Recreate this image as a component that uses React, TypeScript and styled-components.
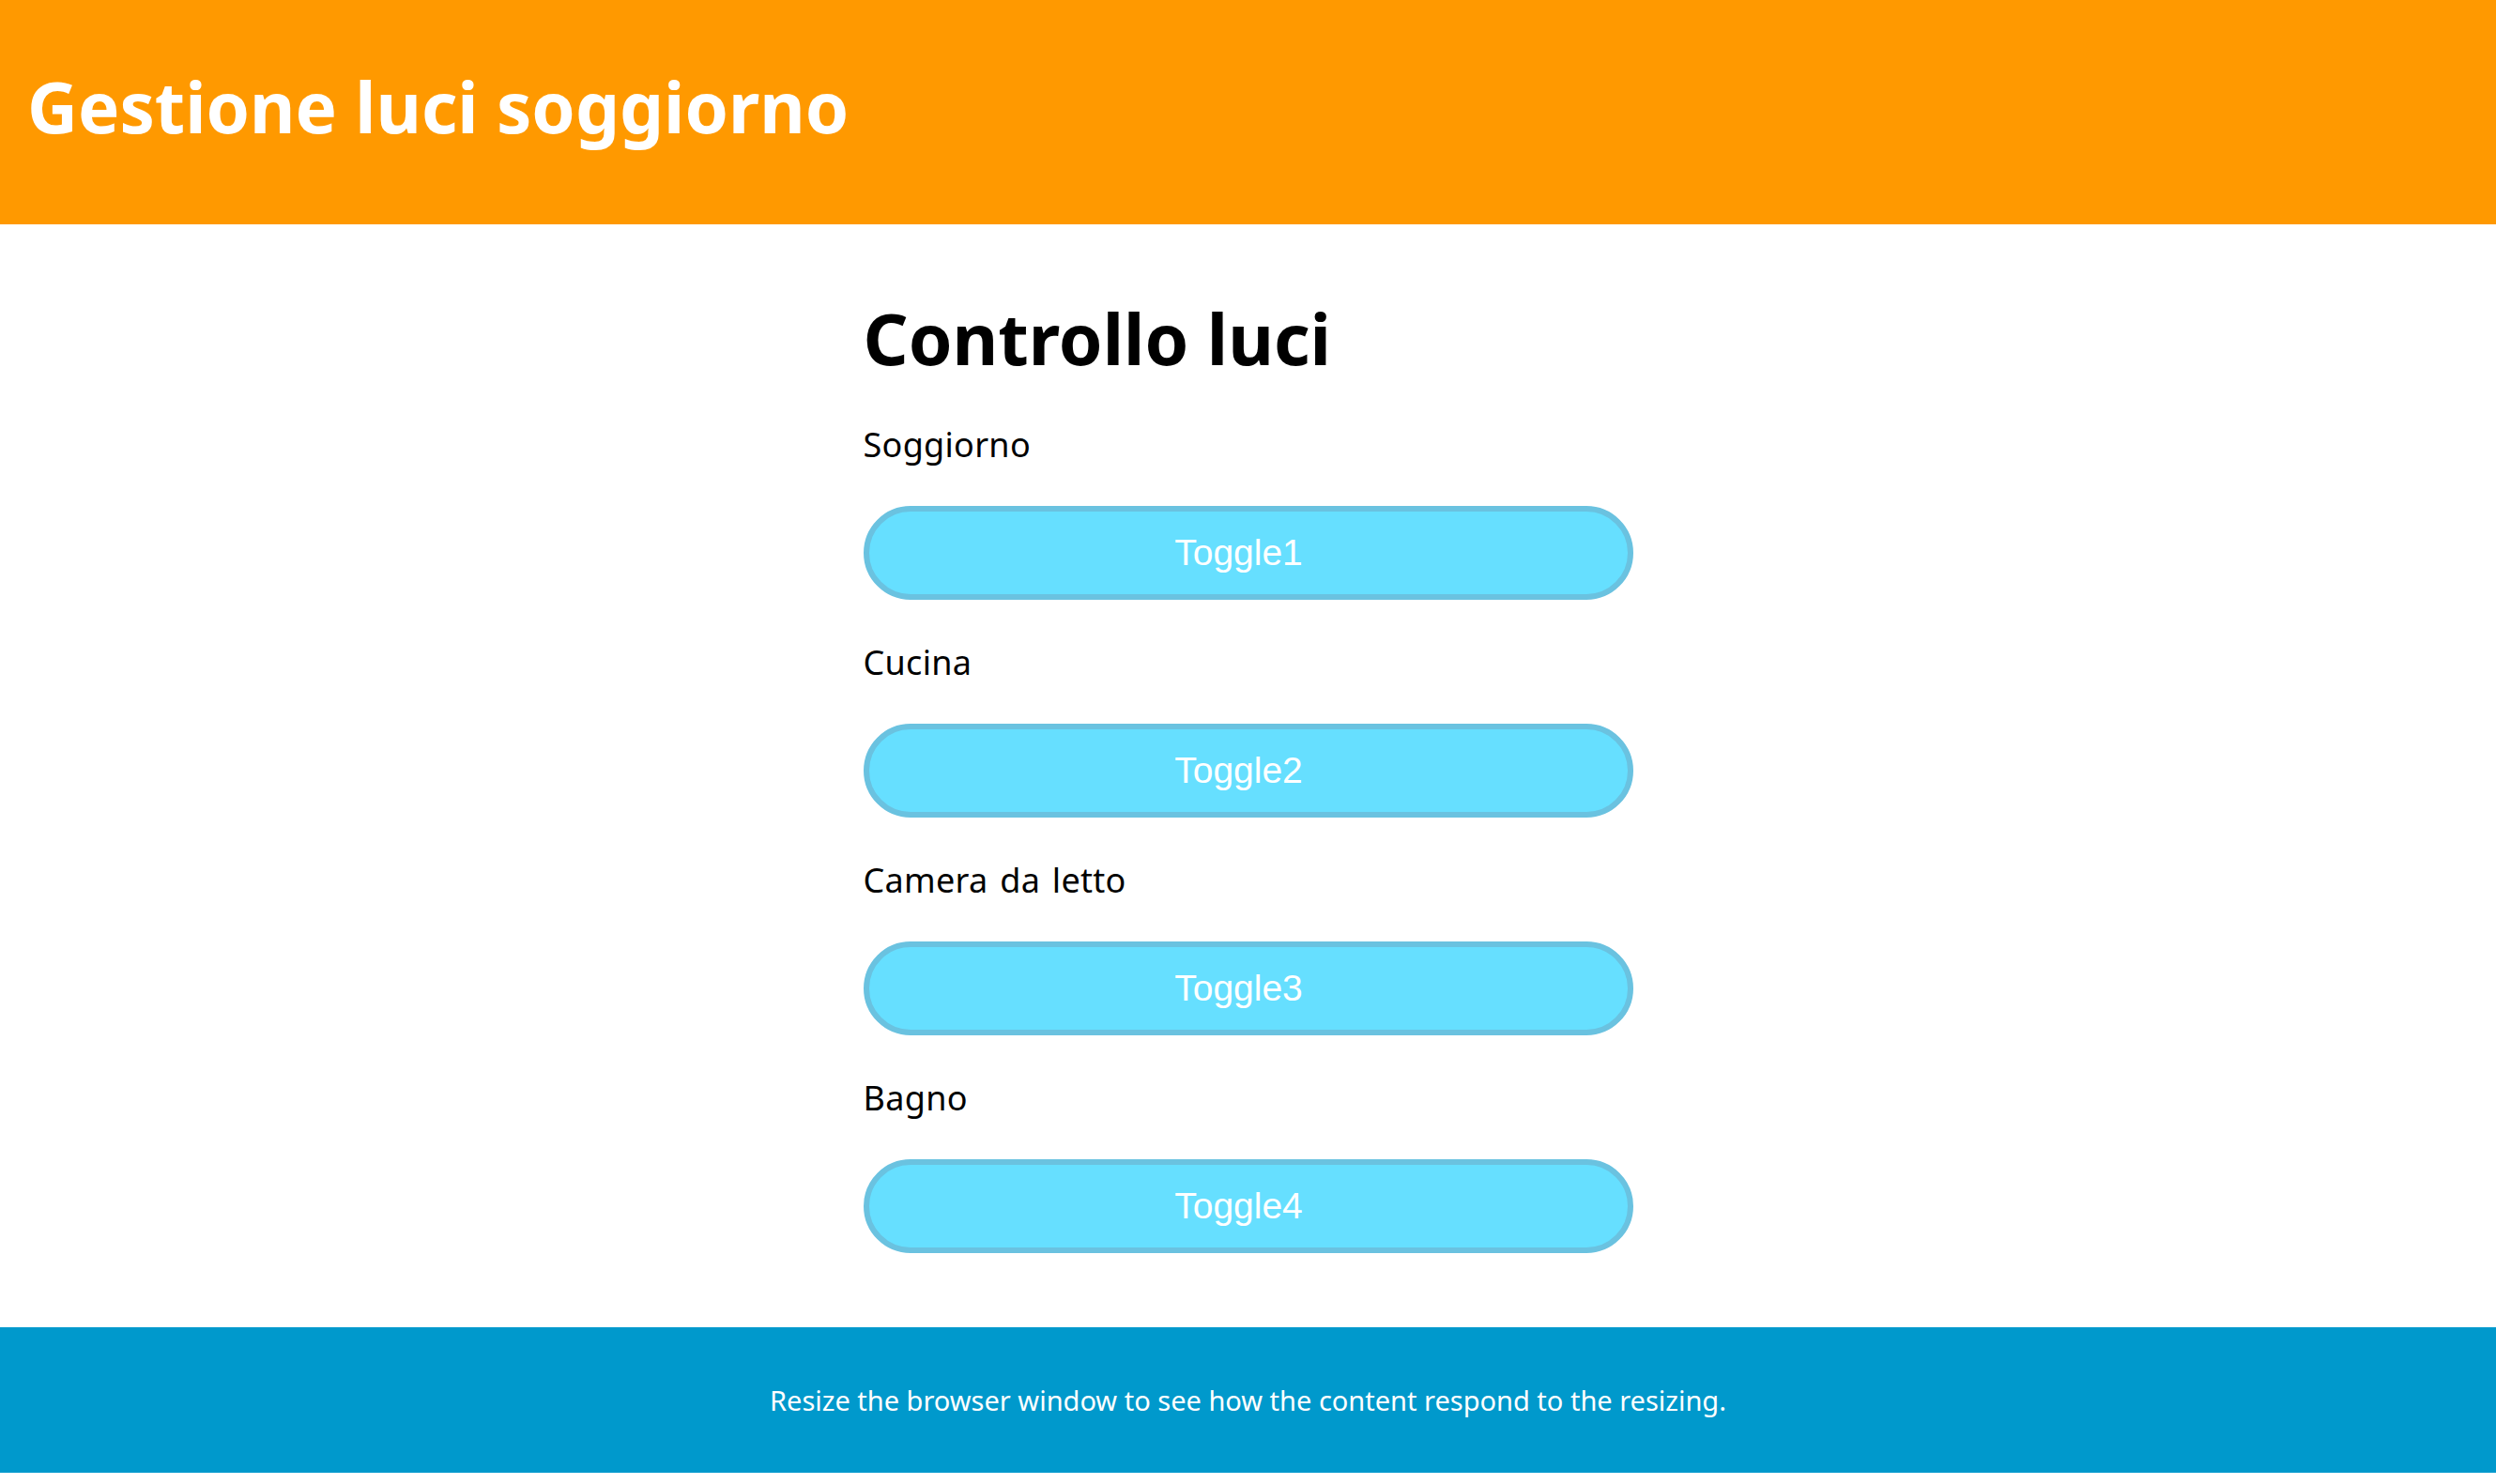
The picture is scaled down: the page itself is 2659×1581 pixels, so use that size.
import React from "react";
import styled, { createGlobalStyle } from "styled-components";

const GlobalStyle = createGlobalStyle`
  html, body {
    margin: 0;
    padding: 0;
    background: #ffffff;
  }
  body {
    font-family: "Noto Sans", "Open Sans", sans-serif;
    color: #000000;
  }
  * { box-sizing: border-box; }
`;

const Page = styled.div`
  display: flex;
  flex-direction: column;
  width: 100%;
`;

const Header = styled.header`
  height: 239px;
  background: #ff9900;
  padding: 62px 29px 0;
`;

const Title = styled.h1`
  margin: 0;
  font-family: "Noto Sans", sans-serif;
  font-weight: 700;
  font-size: 74.5px;
  line-height: normal;
  color: #ffffff;
`;

const Main = styled.main`
  width: 820px;
  margin: 0 auto;
  padding: 70px 0 79px;
  display: flex;
  flex-direction: column;
`;

const SectionTitle = styled.h2`
  margin: 0 0 36px;
  font-family: "Noto Sans", sans-serif;
  font-weight: 700;
  font-size: 75px;
  line-height: normal;
`;

const LightList = styled.div`
  display: flex;
  flex-direction: column;
  gap: 40px;
`;

const LightItem = styled.div`
  display: flex;
  flex-direction: column;
  gap: 38px;
`;

const Label = styled.span`
  font-family: "Noto Sans", sans-serif;
  font-size: 36px;
  letter-spacing: 0.3px;
  word-spacing: 3px;
  line-height: 54px;
`;

const ToggleButton = styled.button`
  width: 100%;
  height: 100px;
  border: 6px solid #6ac2e0;
  border-radius: 50px;
  background: #66dfff;
  color: #ffffff;
  font-family: "Liberation Sans", Arial, sans-serif;
  font-size: 39px;
  padding: 0 20px 0 0;
  cursor: pointer;
`;

const Footer = styled.footer`
  height: 155px;
  background: #0099cc;
  display: flex;
  align-items: center;
  justify-content: center;
  color: #ffffff;
  font-family: "Noto Sans", sans-serif;
  font-size: 29px;
`;

const lights = [
  { name: "Soggiorno", toggle: "Toggle1" },
  { name: "Cucina", toggle: "Toggle2" },
  { name: "Camera da letto", toggle: "Toggle3" },
  { name: "Bagno", toggle: "Toggle4" },
];

export default function App() {
  return (
    <>
      <GlobalStyle />
      <Page>
        <Header>
          <Title>Gestione luci soggiorno</Title>
        </Header>
        <Main>
          <SectionTitle>Controllo luci</SectionTitle>
          <LightList>
            {lights.map((l) => (
              <LightItem key={l.toggle}>
                <Label>{l.name}</Label>
                <ToggleButton type="button">{l.toggle}</ToggleButton>
              </LightItem>
            ))}
          </LightList>
        </Main>
        <Footer>Resize the browser window to see how the content respond to the resizing.</Footer>
      </Page>
    </>
  );
}
